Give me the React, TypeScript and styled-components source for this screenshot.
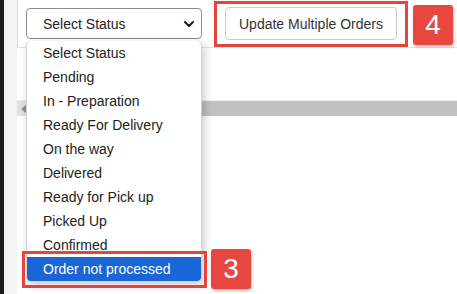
import { createGlobalStyle } from 'styled-components';
import styled from 'styled-components';

const GlobalStyle = createGlobalStyle`
  html, body {
    margin: 0;
    padding: 0;
    background: #ffffff;
  }
  body {
    font-family: 'Liberation Sans', Arial, sans-serif;
    font-size: 14px;
    color: #222222;
  }
`;

const STATUSES = [
  'Select Status',
  'Pending',
  'In - Preparation',
  'Ready For Delivery',
  'On the way',
  'Delivered',
  'Ready for Pick up',
  'Picked Up',
  'Confirmed',
  'Order not processed',
];

const Page = styled.div`
  display: flex;
  width: 457px;
  height: 294px;
  overflow: hidden;
`;

const Rail = styled.div`
  width: 4px;
  flex-shrink: 0;
  background: #1c1c1c;
`;

const Gutter = styled.div`
  width: 13px;
  flex-shrink: 0;
  background: #f3f3f3;
`;

const Main = styled.div`
  position: relative;
  flex: 1;
  display: flex;
  flex-direction: column;
  min-width: 0;
`;

const Toolbar = styled.div`
  height: 47px;
  display: flex;
  align-items: center;
  gap: 23px;
  padding-left: 8px;
  background: #ffffff;
  border-left: 1px solid #dcdcdc;
  border-bottom: 1px solid #e4e4e4;
`;

const SelectBox = styled.div`
  box-sizing: border-box;
  width: 176px;
  height: 31px;
  display: flex;
  align-items: center;
  justify-content: space-between;
  padding: 0 6px 0 16px;
  border: 1px solid #8a8a8a;
  border-radius: 4px;
  background: #ffffff;
  color: #222222;
  font-size: 14px;
`;

const Button = styled.div`
  box-sizing: border-box;
  height: 33px;
  display: flex;
  align-items: center;
  padding: 0 13px;
  border: 1px solid #cccccc;
  border-radius: 4px;
  background: #ffffff;
  color: #333333;
  font-size: 14px;
  white-space: nowrap;
`;

const Content = styled.div`
  flex: 1;
  background: #ffffff;
  padding-top: 52px;
`;

const ScrollBar = styled.div`
  display: flex;
  height: 15px;
  border-top: 1px solid #ececec;
`;

const ScrollArrow = styled.div`
  width: 9px;
  display: flex;
  align-items: center;
  justify-content: flex-end;
  background: #e2e2e2;
  color: #8c8c8c;
`;

const ScrollThumb = styled.div`
  flex: 1;
  background: #c1c1c1;
`;

const OptionList = styled.ul`
  position: absolute;
  left: 9px;
  top: 41px;
  width: 176px;
  margin: 0;
  padding: 0;
  list-style: none;
  box-sizing: border-box;
  background: #ffffff;
  border: 1px solid #d6d6d6;
  border-top: none;
  border-radius: 5px;
  box-shadow: 2px 3px 10px rgba(0, 0, 0, 0.22);
  overflow: hidden;
`;

const Option = styled.li<{ $active?: boolean }>`
  height: 24px;
  line-height: 24px;
  padding-left: 16px;
  font-size: 14px;
  white-space: nowrap;
  color: ${({ $active }) => ($active ? '#ffffff' : '#222222')};
  background: ${({ $active }) => ($active ? '#1a66d6' : 'transparent')};
`;

const Marker = styled.div<{ $left: number; $top: number; $w: number; $h: number }>`
  position: absolute;
  left: ${({ $left }) => $left}px;
  top: ${({ $top }) => $top}px;
  width: ${({ $w }) => $w}px;
  height: ${({ $h }) => $h}px;
  box-sizing: border-box;
  border: 3px solid #e5453c;
  pointer-events: none;
`;

const Badge = styled.div<{ $left: number; $top: number }>`
  position: absolute;
  left: ${({ $left }) => $left}px;
  top: ${({ $top }) => $top}px;
  width: 40px;
  height: 40px;
  display: flex;
  align-items: center;
  justify-content: center;
  background: #e8473f;
  border-radius: 3px;
  box-shadow: 1px 2px 3px rgba(0, 0, 0, 0.25);
  color: #ffffff;
  font-size: 28px;
  font-family: 'Liberation Sans', Arial, sans-serif;
`;

const Chevron = () => (
  <svg width="12" height="8" viewBox="0 0 12 8" aria-hidden>
    <polyline points="2,2 6,6 10,2" fill="none" stroke="#222" strokeWidth="2.2" strokeLinecap="round" strokeLinejoin="round" />
  </svg>
);

const LeftArrow = () => (
  <svg width="5" height="8" viewBox="0 0 5 8" aria-hidden>
    <polygon points="5,0 0,4 5,8" fill="#8c8c8c" />
  </svg>
);

export default function App() {
  return (
    <>
      <GlobalStyle />
      <Page>
        <Rail />
        <Gutter />
        <Main>
          <Toolbar>
            <SelectBox>
              <span>Select Status</span>
              <Chevron />
            </SelectBox>
            <Button>Update Multiple Orders</Button>
          </Toolbar>
          <Content>
            <ScrollBar>
              <ScrollArrow>
                <LeftArrow />
              </ScrollArrow>
              <ScrollThumb />
            </ScrollBar>
          </Content>

          <OptionList>
            {STATUSES.map((s, i) => (
              <Option key={s} $active={i === STATUSES.length - 1}>
                {s}
              </Option>
            ))}
          </OptionList>

          <Marker $left={5} $top={251} $w={185} $h={37} />
          <Badge $left={194} $top={249}>3</Badge>

          <Marker $left={197} $top={1} $w={194} $h={46} />
          <Badge $left={396} $top={5}>4</Badge>
        </Main>
      </Page>
    </>
  );
}
